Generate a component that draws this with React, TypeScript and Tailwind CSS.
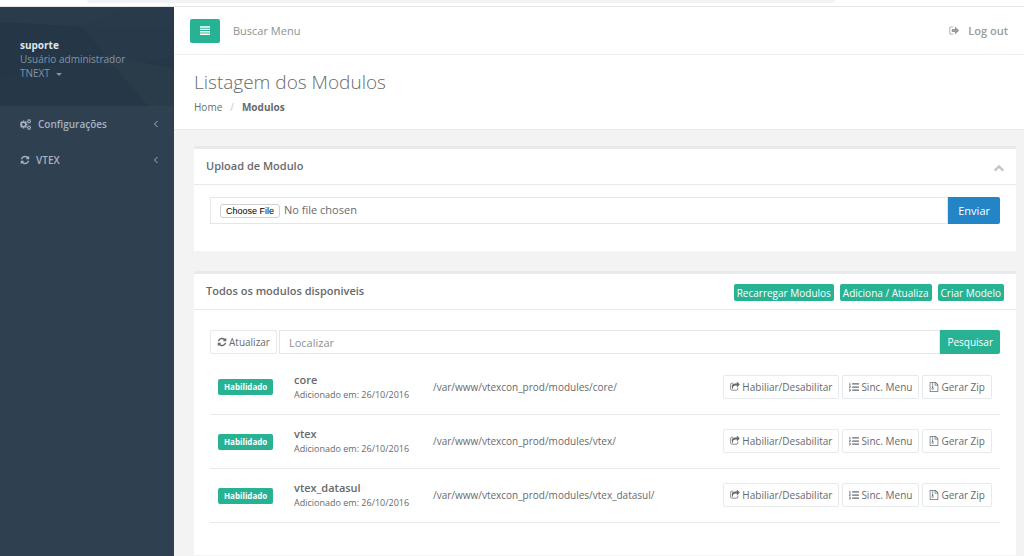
import type { ReactNode } from "react";
import { FaListOl } from "react-icons/fa";

type IconProps = { className?: string };

function Glyph({ className, children }: IconProps & { children: ReactNode }) {
  return (
    <svg viewBox="0 0 1792 1792" fill="currentColor" aria-hidden="true" className={className}>
      {children}
    </svg>
  );
}

function RefreshIcon({ className }: IconProps) {
  return (
    <Glyph className={className}>
      <path d="M1639 1056q0 5-1 7-64 268-268 434.5t-478 166.5q-146 0-282.5-55t-243.5-157l-129 129q-19 19-45 19t-45-19-19-45v-448q0-26 19-45t45-19h448q26 0 45 19t19 45-19 45l-137 137q71 66 161 102t187 36q134 0 250-65t186-179q11-17 53-117 8-23 30-23h192q13 0 22.5 9.5t9.5 22.5zm25-800v448q0 26-19 45t-45 19h-448q-26 0-45-19t-19-45 19-45l138-138q-148-137-349-137-134 0-250 65t-186 179q-11 17-53 117-8 23-30 23h-199q-13 0-22.5-9.5t-9.5-22.5v-7q65-268 270-434.5t480-166.5q146 0 284 55.5t245 156.5l130-129q19-19 45-19t45 19 19 45z" />
    </Glyph>
  );
}

function CogsIcon({ className }: IconProps) {
  return (
    <Glyph className={className}>
      <path d="M832 896q0-106-75-181t-181-75-181 75-75 181 75 181 181 75 181-75 75-181zm768 512q0-52-38-90t-90-38-90 38-38 90q0 53 37.5 90.5t90.5 37.5 90.5-37.5 37.5-90.5zm0-1024q0-52-38-90t-90-38-90 38-38 90q0 53 37.5 90.5t90.5 37.5 90.5-37.5 37.5-90.5zm-384 421v185q0 10-7 19.5t-16 10.5l-155 24q-11 35-32 76 34 48 90 115 7 11 7 20 0 12-7 19-23 30-82.5 89.5t-78.5 59.5q-11 0-21-7l-115-90q-37 19-77 31-11 108-23 155-7 24-30 24h-186q-11 0-20-7.5t-10-17.5l-23-153q-34-10-75-31l-118 89q-7 7-20 7-11 0-21-8-144-133-144-160 0-9 7-19 10-14 41-53t47-61q-23-44-35-82l-152-24q-10-1-17-9.5t-7-19.5v-185q0-10 7-19.5t16-10.5l155-24q11-35 32-76-34-48-90-115-7-11-7-20 0-12 7-20 22-30 82-89t79-59q11 0 21 7l115 90q34-18 77-32 11-108 23-154 7-24 30-24h186q11 0 20 7.5t10 17.5l23 153q34 10 75 31l118-89q8-7 20-7 11 0 21 8 144 133 144 160 0 8-7 19-12 16-42 54t-45 60q23 48 34 82l152 23q10 2 17 10.5t7 19.5zm640 533v140q0 16-149 31-12 27-30 52 51 113 51 138 0 4-4 7-122 71-124 71-8 0-46-47t-52-68q-20 2-30 2t-30-2q-14 21-52 68t-46 47q-2 0-124-71-4-3-4-7 0-25 51-138-18-25-30-52-149-15-149-31v-140q0-16 149-31 13-29 30-52-51-113-51-138 0-4 4-7 4-2 35-20t59-34 30-16q8 0 46 46.5t52 67.5q20-2 30-2t30 2q51-71 92-112l6-2q4 0 124 70 4 3 4 7 0 25-51 138 17 23 30 52 149 15 149 31zm0-1024v140q0 16-149 31-12 27-30 52 51 113 51 138 0 4-4 7-122 71-124 71-8 0-46-47t-52-68q-20 2-30 2t-30-2q-14 21-52 68t-46 47q-2 0-124-71-4-3-4-7 0-25 51-138-18-25-30-52-149-15-149-31v-140q0-16 149-31 13-29 30-52-51-113-51-138 0-4 4-7 4-2 35-20t59-34 30-16q8 0 46 46.5t52 67.5q20-2 30-2t30 2q51-71 92-112l6-2q4 0 124 70 4 3 4 7 0 25-51 138 17 23 30 52 149 15 149 31z" />
    </Glyph>
  );
}

function SignOutIcon({ className }: IconProps) {
  return (
    <Glyph className={className}>
      <path d="M704 1440q0 4 1 20t.5 26.5-3 23.5-10 19.5-20.5 6.5h-320q-119 0-203.5-84.5t-84.5-203.5v-704q0-119 84.5-203.5t203.5-84.5h320q13 0 22.5 9.5t9.5 22.5q0 4 1 20t.5 26.5-3 23.5-10 19.5-20.5 6.5h-320q-66 0-113 47t-47 113v704q0 66 47 113t113 47h312l11.5 1 11.5 3 8 5.5 7 9 2 13.5zm928-544q0 26-19 45l-544 544q-19 19-45 19t-45-19-19-45v-288h-448q-26 0-45-19t-19-45v-384q0-26 19-45t45-19h448v-288q0-26 19-45t45-19 45 19l544 544q19 19 19 45z" />
    </Glyph>
  );
}

function ShareIcon({ className }: IconProps) {
  return (
    <Glyph className={className}>
      <path d="M1472 989v259q0 119-84.5 203.5t-203.5 84.5h-832q-119 0-203.5-84.5t-84.5-203.5v-832q0-119 84.5-203.5t203.5-84.5h255q13 0 22.5 9.5t9.5 22.5q0 27-26 32-77 26-133 60-10 4-16 4h-112q-66 0-113 47t-47 113v832q0 66 47 113t113 47h832q66 0 113-47t47-113v-214q0-19 18-29 28-13 54-37 16-16 35-8 21 9 21 29zm237-496l-384 384q-18 19-45 19-12 0-25-5-39-17-39-59v-192h-160q-323 0-438 131-119 137-74 473 3 23-20 34-8 2-12 2-16 0-26-13-10-14-21-31t-39.5-68.5-49.5-99.5-38.5-114-17.5-122q0-49 3.5-91t14-90 28-88 47-81.5 68.5-74 94.5-61.5 124.5-48.5 159.5-30.5 196.5-11h160v-192q0-42 39-59 13-5 25-5 26 0 45 19l384 384q19 19 19 45t-19 45z" />
    </Glyph>
  );
}

function ZipFileIcon({ className }: IconProps) {
  return (
    <Glyph className={className}>
      <path d="M1596 380q28 28 48 76t20 88v1152q0 40-28 68t-68 28h-1344q-40 0-68-28t-28-68v-1600q0-40 28-68t68-28h896q40 0 88 20t76 48zm-444-244v376h376q-10-29-22-41l-313-313q-12-12-41-22zm384 1528v-1024h-416q-40 0-68-28t-28-68v-416h-768v1536h1280z" />
      <path d="M512 128h128v128h-128zM640 256h128v128h-128zM512 384h128v128h-128zM640 512h128v128h-128zM512 640h128v128h-128zM590 768h130l80 350q32 110-10 185-50 90-150 90t-150-90q-42-75-10-185zM640 1140a90 64 0 1 0 .1 0z" fillRule="evenodd" />
    </Glyph>
  );
}

function AngleLeftIcon({ className }: IconProps) {
  return (
    <svg viewBox="0 0 8 10" fill="none" stroke="currentColor" aria-hidden="true" className={className}>
      <path d="M5.5 2 2.5 5l3 3" />
    </svg>
  );
}

function ChevronUpIcon({ className }: IconProps) {
  return (
    <svg viewBox="0 0 10 8" fill="none" stroke="currentColor" strokeWidth="2.2" aria-hidden="true" className={className}>
      <path d="M.8 6.6 5 2.4l4.2 4.2" />
    </svg>
  );
}

function MenuIcon({ className }: IconProps) {
  return (
    <svg viewBox="0 0 10 9" fill="currentColor" aria-hidden="true" className={className}>
      <path d="M0 .3h10v1.4H0zM0 2.7h10v1.4H0zM0 5.1h10v1.4H0zM0 7.5h10v1.4H0z" />
    </svg>
  );
}

const modules = [
  { name: "core", path: "/var/www/vtexcon_prod/modules/core/" },
  { name: "vtex", path: "/var/www/vtexcon_prod/modules/vtex/" },
  { name: "vtex_datasul", path: "/var/www/vtexcon_prod/modules/vtex_datasul/" },
];

const headerActions = ["Recarregar Modulos", "Adiciona / Atualiza", "Criar Modelo"];

function RowButton({ icon, children }: { icon: ReactNode; children: ReactNode }) {
  return (
    <button
      type="button"
      className="flex h-6 items-center gap-0.5 rounded-xs border border-[#e7eaec] bg-white px-1.5"
    >
      {icon}
      {children}
    </button>
  );
}

function Sidebar() {
  return (
    <aside className="flex w-[174px] shrink-0 flex-col bg-[#2f4050]">
      <div className="relative h-[99px] overflow-hidden bg-[#263747]">
        <svg viewBox="0 0 174 99" preserveAspectRatio="none" aria-hidden="true" className="absolute inset-0 size-full">
          <path d="M0 0h135L82 20 0 15z" fill="#2a3c4b" />
          <path d="M82 20 135 0h39v20z" fill="#293a4a" />
          <path d="M82 20l92 0v30l-70 12z" fill="#283949" />
          <path d="M104 47l70 15v37h-26z" fill="#2a3b4a" />
          <path d="M0 15l82 5 22 27L0 70z" fill="#253646" />
        </svg>
        <div className="relative px-5 pt-[31px] leading-[14px] text-[#8095a8]">
          <strong className="block font-bold text-[#dfe4ed]">suporte</strong>
          <button type="button" className="block text-left">
            Usuário administrador
            <span className="flex items-center gap-1.5">
              TNEXT
              <span className="mt-0.5 border-x-[3px] border-t-[3px] border-x-transparent border-t-current" />
            </span>
          </button>
        </div>
      </div>
      <nav className="font-semibold text-[#a7b1c2]">
        <a href="#configuracoes" className="flex h-9 items-center px-5">
          <CogsIcon className="size-[11px]" />
          <span className="ml-[7px] flex-1">Configurações</span>
          <AngleLeftIcon className="-mr-1.5 h-2.5 w-2" />
        </a>
        <a href="#vtex" className="flex h-9 items-center px-5">
          <RefreshIcon className="size-[10px]" />
          <span className="ml-1.5 flex-1">VTEX</span>
          <AngleLeftIcon className="-mr-1.5 h-2.5 w-2" />
        </a>
      </nav>
    </aside>
  );
}

export default function App() {
  return (
    <div className="flex min-h-screen flex-col bg-white font-['Open_Sans','Liberation_Sans',sans-serif] text-[10px] leading-4 text-[#676a6c]">
      <div className="h-[7px] border-b border-[#e4e5e7] pr-[189px] pl-[87px]">
        <div className="h-[3px] rounded-b-full bg-[#f1f3f4]" />
      </div>
      <div className="flex flex-1">
        <Sidebar />
        <main className="min-w-0 flex-1 bg-[#f3f3f4]">
          <header className="flex h-12 items-center border-b border-[#eceeef] bg-white pr-4 pl-4">
            <button
              type="button"
              aria-label="Menu"
              className="flex h-6 w-[30px] items-center justify-center rounded-xs bg-[#28b294] text-white"
            >
              <MenuIcon className="h-[9px] w-2.5" />
            </button>
            <input
              type="text"
              aria-label="Buscar Menu"
              placeholder="Buscar Menu"
              className="ml-[13px] min-w-0 flex-1 bg-transparent text-[11px] outline-none placeholder:text-[#8f9192]"
            />
            <a href="#logout" className="flex items-center gap-2 text-[11px] font-semibold text-[#999c9e]">
              <SignOutIcon className="size-[11px]" />
              Log out
            </a>
          </header>

          <section className="h-[75px] border-b border-[#e7eaec] bg-white px-5 pt-[15px]">
            <h1 className="text-[19px] leading-6 font-light">Listagem dos Modulos</h1>
            <nav aria-label="Breadcrumb" className="mt-[5px] flex">
              <a href="#home">Home</a>
              <span className="mx-2 text-[#ccc]">/</span>
              <strong className="font-bold">Modulos</strong>
            </nav>
          </section>

          <div className="flex flex-col gap-5 pt-4 pr-2 pl-5">
            <section className="border-t-[3px] border-[#e7eaec] bg-white">
              <div className="flex h-9 items-center justify-between border-b border-[#e7eaec] pr-3 pb-0.5 pl-3">
                <h2 className="text-[11px] font-semibold">Upload de Modulo</h2>
                <button type="button" aria-label="Recolher" className="mt-1 text-[#c4c4c4]">
                  <ChevronUpIcon className="h-2 w-2.5" />
                </button>
              </div>
              <form className="flex px-4 pt-3 pb-[27px]">
                <input
                  type="file"
                  aria-label="Arquivo do modulo"
                  className="h-[27px] min-w-0 flex-1 border border-[#e5e6e7] px-[9px] py-1 text-[11px] leading-4 file:mr-1 file:h-[14px] file:rounded-[3px] file:border file:border-solid file:border-[#d0d0d0] file:bg-white file:px-[5px] file:font-['Liberation_Sans',sans-serif] file:text-[9px] file:leading-3 file:text-black"
                />
                <button type="button" className="h-[27px] rounded-r-xs bg-[#2385c6] px-2.5 text-[11px] text-white">
                  Enviar
                </button>
              </form>
            </section>

            <section className="border-t-[3px] border-[#e7eaec] bg-white pb-8">
              <div className="flex h-9 items-center justify-between border-b border-[#e7eaec] pr-3 pb-0.5 pl-3">
                <h2 className="text-[11px] font-semibold">Todos os modulos disponiveis</h2>
                <div className="flex gap-1.5">
                  {headerActions.map((label) => (
                    <button
                      key={label}
                      type="button"
                      className="mt-1 h-[17px] rounded-xs bg-[#28b294] px-[3px] text-white"
                    >
                      {label}
                    </button>
                  ))}
                </div>
              </div>
              <div className="px-4 pt-5">
                <form className="flex">
                  <button
                    type="button"
                    className="mr-0.5 flex h-6 items-center gap-0.5 rounded-xs border border-[#e7eaec] px-1.5"
                  >
                    <RefreshIcon className="size-[10px]" />
                    Atualizar
                  </button>
                  <input
                    type="text"
                    aria-label="Localizar"
                    placeholder="Localizar"
                    className="h-6 min-w-0 flex-1 border border-[#e5e6e7] px-[9px] text-[11px] outline-none placeholder:text-[#8f9192]"
                  />
                  <button type="button" className="h-6 rounded-r-xs bg-[#28b294] px-[7px] text-white">
                    Pesquisar
                  </button>
                </form>
                <table className="mt-1.5 w-full border-collapse">
                  <tbody>
                    {modules.map((m) => (
                      <tr key={m.name} className="h-[54px] border-b border-[#e7eaec]">
                        <td className="w-[84px] pl-2">
                          <span className="inline-block rounded-xs bg-[#28b294] px-1.5 text-[8px] leading-4 font-bold text-white">
                            Habilidado
                          </span>
                        </td>
                        <td className="w-[139px]">
                          <a href={`#${m.name}`} className="block text-[11px] leading-4 font-semibold">
                            {m.name}
                          </a>
                          <small className="block text-[9px] leading-[14px]">Adicionado em: 26/10/2016</small>
                        </td>
                        <td>{m.path}</td>
                        <td className="pr-2">
                          <div className="flex justify-end gap-[3px]">
                            <RowButton icon={<ShareIcon className="size-[10px]" />}>Habiliar/Desabilitar</RowButton>
                            <RowButton icon={<FaListOl className="size-[10px]" />}>Sinc. Menu</RowButton>
                            <RowButton icon={<ZipFileIcon className="size-[10px]" />}>Gerar Zip</RowButton>
                          </div>
                        </td>
                      </tr>
                    ))}
                  </tbody>
                </table>
              </div>
            </section>
          </div>
        </main>
      </div>
    </div>
  );
}
